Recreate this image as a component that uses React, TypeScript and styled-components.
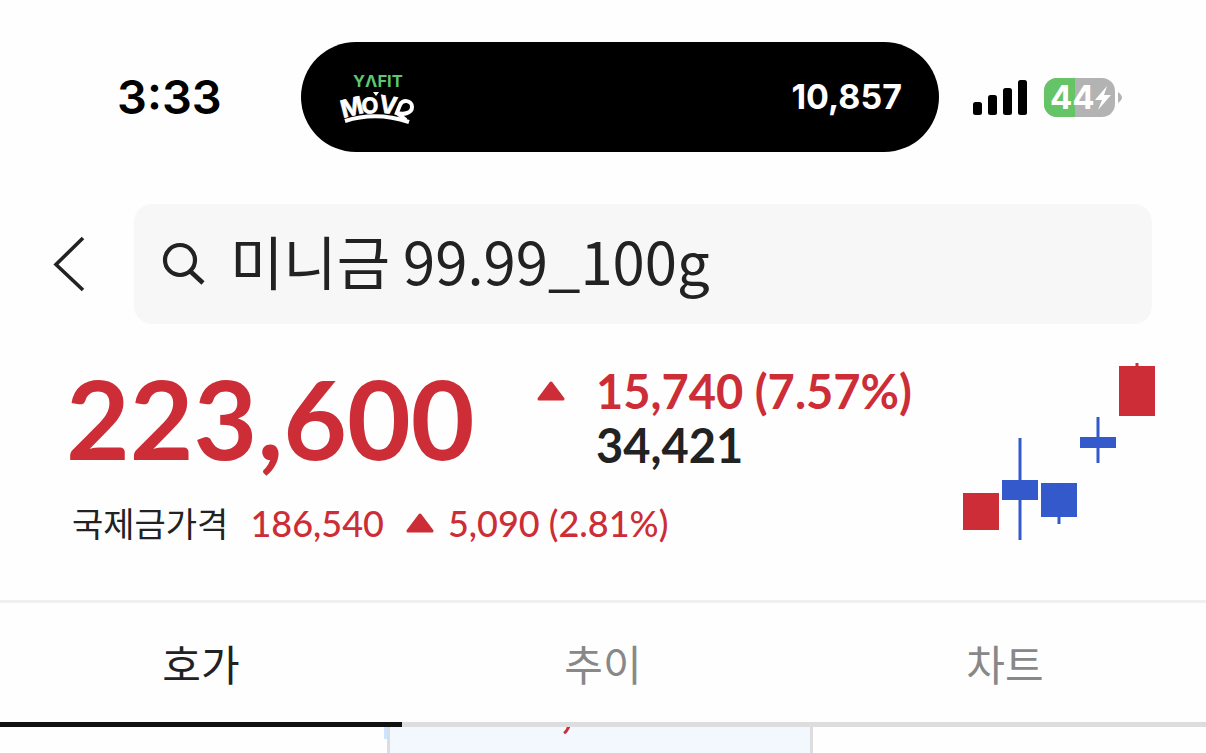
import React, { useState } from "react";
import styled, { createGlobalStyle } from "styled-components";

const RED = "#cc2d37";
const BLUE = "#3459cb";
const INK = "#222222";
const NUMERIC = `Lato, "Noto Sans CJK KR", sans-serif`;
const KOREAN = `"Noto Sans CJK KR", sans-serif`;

const GlobalStyle = createGlobalStyle`
  * { box-sizing: border-box; }
  html, body { margin: 0; background: #fefefe; }
  button, input { font: inherit; color: inherit; border: 0; padding: 0; background: none; }
  button { cursor: pointer; }
`;

const Page = styled.div`
  display: flex;
  flex-direction: column;
  height: 100vh;
  overflow: hidden;
  color: ${INK};
  font-family: ${KOREAN};
`;

const StatusBar = styled.header`
  display: flex;
  align-items: center;
  padding: 42px 83px 52px 117px;
  color: #000;
  font-family: Inter, sans-serif;
`;

const Clock = styled.time`
  width: 184px;
  font-size: 47px;
  line-height: 56px;
  font-weight: 600;
`;

const Island = styled.div`
  flex: 1;
  display: flex;
  align-items: center;
  justify-content: space-between;
  height: 110px;
  padding: 0 37px;
  border-radius: 55px;
  background: #000;
  color: #fff;
`;

const StepCount = styled.span`
  font-size: 34px;
  line-height: 40px;
  font-weight: 700;
`;

const StatusIcons = styled.div`
  display: flex;
  align-items: center;
  gap: 16px;
  margin-left: 34px;
`;

const SearchRow = styled.div`
  display: flex;
  padding-right: 54px;
`;

const BackButton = styled.button`
  display: flex;
  align-items: center;
  width: 134px;
  padding-left: 52px;
`;

const SearchField = styled.label`
  flex: 1;
  display: flex;
  align-items: center;
  gap: 24px;
  height: 120px;
  padding: 0 28px;
  border-radius: 18px;
  background: #f7f7f7;
`;

const SearchInput = styled.input`
  flex: 1;
  min-width: 0;
  height: 96px;
  padding-bottom: 8px;
  outline: 0;
  font-size: 58px;
`;

const Quote = styled.section`
  display: flex;
  justify-content: space-between;
  padding: 38px 50px 55px 66px;
  border-bottom: 3px solid #f0f0f0;
  font-family: ${NUMERIC};
`;

const QuoteMain = styled.div`
  display: flex;
  align-items: flex-end;
`;

const Price = styled.strong`
  width: 471px;
  color: ${RED};
  font-size: 110px;
  line-height: 110px;
  font-weight: 700;
`;

const Change = styled.div`
  display: grid;
  grid-template-columns: 28px auto;
  column-gap: 31px;
  align-items: center;
  font-size: 47px;
  line-height: 54px;
  font-weight: 700;
`;

const Rise = styled.span`
  color: ${RED};
`;

const Volume = styled.span`
  grid-column: 2;
`;

const GoldRow = styled.div`
  display: flex;
  align-items: center;
  margin-top: 29px;
  padding-left: 6px;
  color: ${RED};
  font-size: 36px;
  line-height: 44px;
  font-weight: 500;
`;

const GoldLabel = styled.span`
  margin-right: 22px;
  color: ${INK};
  font-family: ${KOREAN};
  font-size: 34px;
  font-weight: 400;
`;

const GoldChange = styled.span`
  display: flex;
  align-items: center;
  gap: 14px;
  margin-left: 22px;
`;

const Tabs = styled.nav`
  display: grid;
  grid-template-columns: repeat(3, 1fr);
`;

const Tab = styled.button<{ $active: boolean }>`
  height: 124px;
  border-bottom: 5px solid ${(p) => (p.$active ? "#111111" : "#dddddd")};
  color: ${(p) => (p.$active ? INK : "#888888")};
  font-size: 42px;
  line-height: 60px;
  font-weight: 400;
`;

const OrderBook = styled.section`
  flex: 1;
  min-height: 0;
  display: grid;
  grid-template-columns: 387fr 426fr 393fr;
  overflow: hidden;
`;

const AskSide = styled.div`
  display: flex;
  justify-content: flex-end;
`;

const AskBar = styled.div`
  width: 3px;
  height: 12px;
  background: #cce4ff;
`;

const PriceCell = styled.div`
  padding-left: 84px;
  overflow: hidden;
  border: solid #dddddd;
  border-width: 0 3px;
  background: #f3f8ff;
`;

const OrderPrice = styled.span`
  display: block;
  margin-top: -44px;
  color: ${RED};
  font: 700 50px/50px ${NUMERIC};
`;

const Triangle = () => (
  <svg width="28" height="20" viewBox="0 0 28 20" aria-hidden="true">
    <path d="M14 2 L26 18 H2 Z" fill={RED} stroke={RED} strokeWidth="3" strokeLinejoin="round" />
  </svg>
);

const YafitLogo = () => (
  <svg width="78" height="56" viewBox="0 0 78 56" role="img" aria-label="YAFIT MOVE">
    <text x="15" y="18" fill="#5cc671" fontFamily="Inter" fontSize="16.500" fontWeight="700">YΛFIT</text>
    <g fill="#fff" stroke="#fff" strokeWidth="0.600" fontFamily="Inter" fontWeight="700" fontSize="24">
      <text transform="translate(5 49) rotate(-14)">M</text>
      <text transform="translate(24 45) rotate(-4)" fontSize="22">O</text>
      <text transform="translate(40 43) rotate(9)">V</text>
    </g>
    <path d="M35 23 H41 L38 27 Z" fill="#fff" />
    <path
      d="M58 46 L62 36 C64 30 74 31 74 38 C74 44 66 46 59 44 L68 51"
      fill="none" stroke="#fff" strokeWidth="4" strokeLinejoin="round"
    />
    <path d="M7 52 Q38 42 71 53" fill="none" stroke="#fff" strokeWidth="4" />
  </svg>
);

const Signal = () => (
  <svg width="55" height="36" viewBox="0 0 55 36" role="img" aria-label="Signal strength">
    <rect x="0" y="23" width="9" height="13" rx="2.500" />
    <rect x="15" y="16" width="9" height="20" rx="2.500" />
    <rect x="30" y="9" width="9" height="27" rx="2.500" />
    <rect x="45" y="1" width="9" height="35" rx="2.500" />
  </svg>
);

const Battery = () => (
  <svg width="79" height="40" viewBox="0 0 79 40" role="img" aria-label="Battery 44%, charging">
    <defs>
      <clipPath id="battery-body"><rect y="1" width="71" height="39" rx="13" /></clipPath>
    </defs>
    <g clipPath="url(#battery-body)">
      <rect width="72" height="40" fill="#b3b3b3" />
      <rect width="31" height="40" fill="#65c466" />
    </g>
    <path d="M74 15 Q78 18 78 20.500 Q78 23 74 26 Z" fill="#b3b3b3" />
    <text x="6" y="32" fill="#fff" fontFamily="Inter" fontSize="33" fontWeight="700">44</text>
    <path d="M63 9 L51 23 H58 L54 33 L67 18 H60 Z" fill="#fff" />
  </svg>
);

type Candle = { x: number; color: string; top: number; height: number; high: number; low: number };

const candles: Candle[] = [
  { x: 0, color: RED, top: 131, height: 37, high: 131, low: 168 },
  { x: 39, color: BLUE, top: 118, height: 20, high: 76, low: 178 },
  { x: 78, color: BLUE, top: 121, height: 34, high: 121, low: 162 },
  { x: 117, color: BLUE, top: 75, height: 11, high: 55, low: 101 },
  { x: 156, color: RED, top: 4, height: 50, high: 1, low: 54 },
];

const CandleChart = () => (
  <svg width="193" height="183" viewBox="0 0 193 183" role="img" aria-label="5-day candles">
    {candles.map((c) => (
      <g key={c.x} fill={c.color}>
        <rect x={c.x} y={c.top} width="36" height={c.height} />
        <rect x={c.x + 16.5} y={c.high} width="3" height={c.low - c.high} />
      </g>
    ))}
  </svg>
);

const tabs = ["호가", "추이", "차트"];

export default function App() {
  const [active, setActive] = useState(0);
  const [query, setQuery] = useState("미니금 99.99_100g");

  return (
    <Page>
      <GlobalStyle />
      <StatusBar>
        <Clock>3:33</Clock>
        <Island>
          <YafitLogo />
          <StepCount>10,857</StepCount>
        </Island>
        <StatusIcons>
          <Signal />
          <Battery />
        </StatusIcons>
      </StatusBar>

      <SearchRow>
        <BackButton aria-label="뒤로">
          <svg width="34" height="56" viewBox="0 0 34 56" fill="none" stroke={INK} strokeWidth="3.600">
            <path d="M31 2 L4 28.500 L31 54" />
          </svg>
        </BackButton>
        <SearchField>
          <svg width="44" height="44" viewBox="0 0 44 44" fill="none" stroke={INK} strokeWidth="4.200" aria-hidden="true">
            <circle cx="18" cy="18" r="15" />
            <path d="M28 29 L41 41" strokeWidth="4.600" />
          </svg>
          <SearchInput aria-label="종목 검색" value={query} onChange={(e) => setQuery(e.target.value)} />
        </SearchField>
      </SearchRow>

      <Quote>
        <div>
          <QuoteMain>
            <Price>223,600</Price>
            <Change>
              <Triangle />
              <Rise>15,740 (7.57%)</Rise>
              <Volume>34,421</Volume>
            </Change>
          </QuoteMain>
          <GoldRow>
            <GoldLabel>국제금가격</GoldLabel>
            <span>186,540</span>
            <GoldChange>
              <Triangle />
              5,090 (2.81%)
            </GoldChange>
          </GoldRow>
        </div>
        <CandleChart />
      </Quote>

      <Tabs>
        {tabs.map((name, i) => (
          <Tab key={name} $active={i === active} aria-pressed={i === active} onClick={() => setActive(i)}>
            {name}
          </Tab>
        ))}
      </Tabs>

      <OrderBook>
        <AskSide><AskBar /></AskSide>
        <PriceCell><OrderPrice>223,710</OrderPrice></PriceCell>
      </OrderBook>
    </Page>
  );
}
